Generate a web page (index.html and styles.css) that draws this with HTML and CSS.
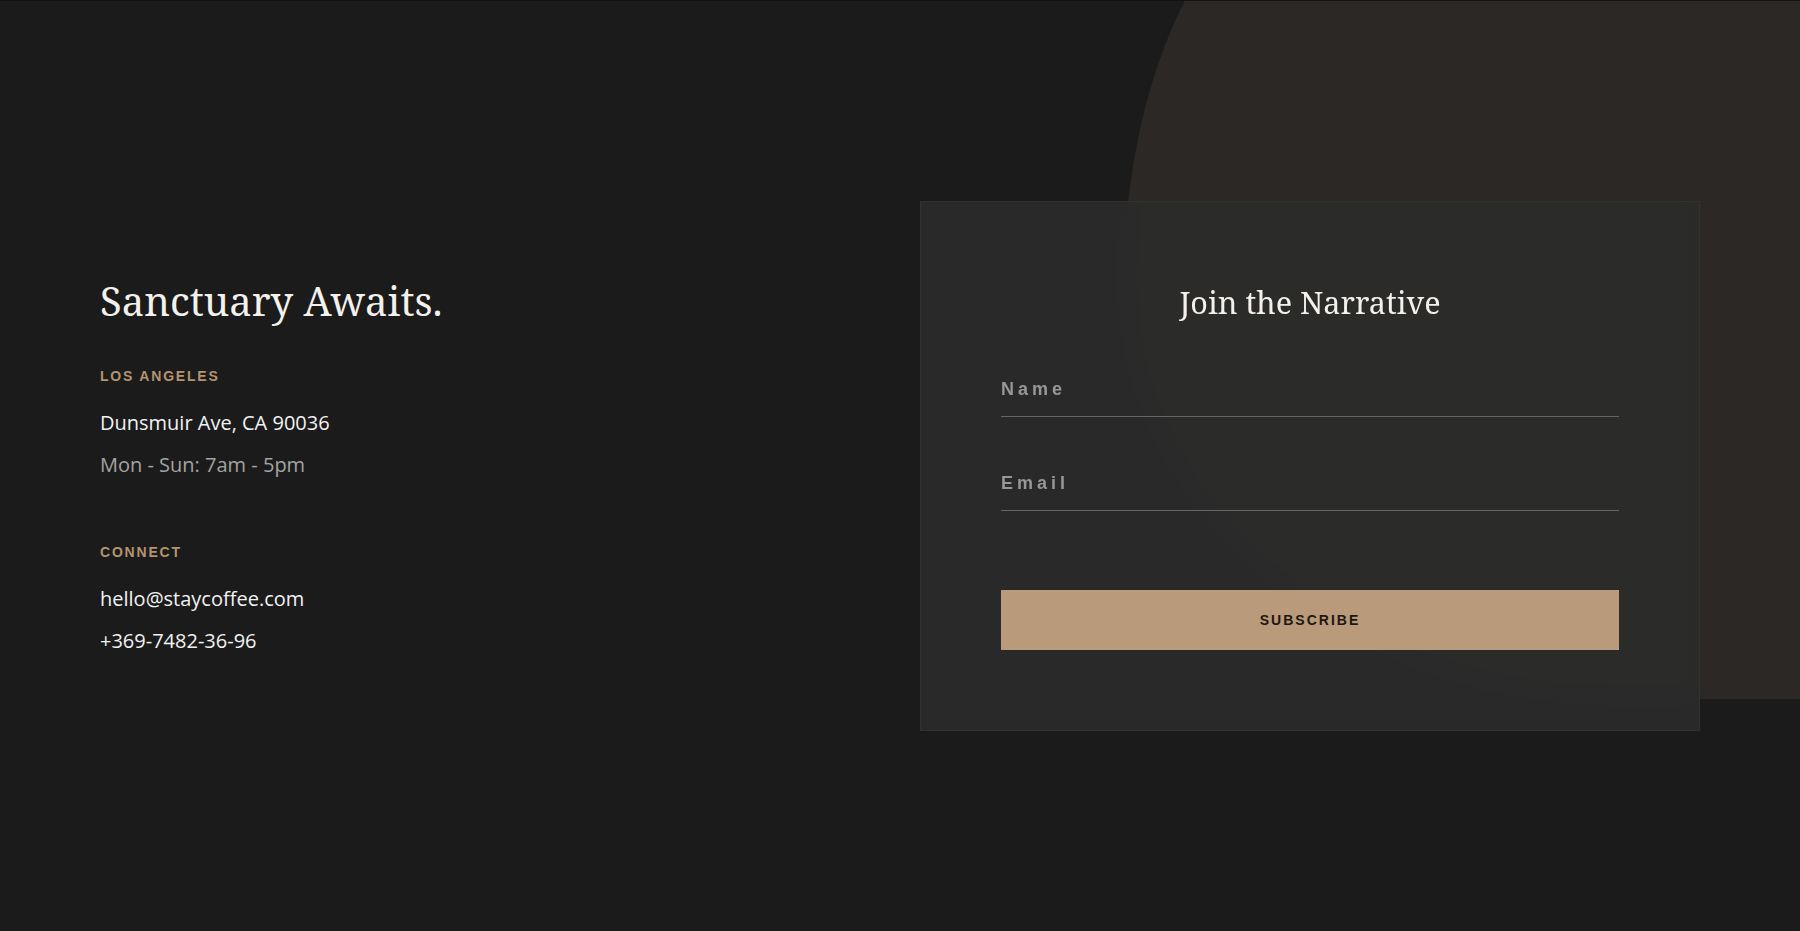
FILE: index.html
```html
<!DOCTYPE html>
<html lang="en">
<head>
    <meta charset="UTF-8">
    <meta name="viewport" content="width=device-width, initial-scale=1.0">
    <title>Stay Coffee - Contact</title>
    <link rel="stylesheet" href="styles.css">
</head>
<body>
    <section class="contact">
        <div class="contact-decor"></div>

        <div class="contact-inner">
            <div class="contact-info">
                <h2 class="contact-title">Sanctuary Awaits.</h2>

                <div class="info-group">
                    <h4 class="info-label">Los Angeles</h4>
                    <p class="info-line">Dunsmuir Ave, CA 90036</p>
                    <p class="info-line muted">Mon - Sun: 7am - 5pm</p>
                </div>

                <div class="info-group">
                    <h4 class="info-label">Connect</h4>
                    <p class="info-line">hello@staycoffee.com</p>
                    <p class="info-line">+369-7482-36-96</p>
                </div>
            </div>

            <form class="newsletter" onsubmit="return false;">
                <h3 class="newsletter-title">Join the Narrative</h3>
                <input type="text" class="newsletter-input" placeholder="Name">
                <input type="email" class="newsletter-input" placeholder="Email">
                <button type="submit" class="newsletter-button">Subscribe</button>
            </form>
        </div>
    </section>
</body>
</html>
```

FILE: styles.css
```css
* {
    box-sizing: border-box;
}

body {
    margin: 0;
    padding: 0;
    background-color: #1b1b1b;
    color: #f0eeeb;
    font-family: 'Open Sans', 'Noto Sans', sans-serif;
}

.contact {
    position: relative;
    height: 100vh;
    border-top: 1px solid #131313;
    overflow: hidden;
}

/* warm blob behind the form */
.contact-decor {
    position: absolute;
    top: -141px;
    right: 0;
    width: 676px;
    height: 839px;
    background: rgba(185, 155, 123, 0.1);
    border-radius: 240px 0 0 494px / 420px 0 0 419px;
}

.contact-inner {
    position: relative;
    height: 100%;
    padding: 0 100px;
    display: grid;
    grid-template-columns: 1fr 1fr;
    gap: 40px;
    align-items: center;
}

.contact-info {
    padding-top: 1.5px;
}

.contact-title {
    font-family: 'Noto Serif', 'DejaVu Serif', serif;
    font-weight: 400;
    font-size: 40px;
    line-height: 48px;
    margin: 0 0 41px;
    color: #f4f1ec;
}

.info-group {
    margin-bottom: 61px;
}

.info-group:last-child {
    margin-bottom: 0;
}

.info-label {
    font-family: 'Liberation Sans', Arial, sans-serif;
    font-weight: 700;
    font-size: 14px;
    line-height: 20px;
    letter-spacing: 1.8px;
    text-transform: uppercase;
    color: #b3946f;
    margin: 0 0 21px;
}

.info-line {
    font-size: 20px;
    line-height: 32px;
    margin: 0 0 10px;
    color: #f2f2f2;
}

.info-line:last-child {
    margin-bottom: 0;
}

.info-line.muted {
    color: #a3a3a3;
}

.newsletter {
    display: flex;
    flex-direction: column;
    padding: 80px;
    background: rgba(43, 43, 43, 0.9);
    border: 1px solid rgba(255, 255, 255, 0.04);
    backdrop-filter: blur(8px);
}

.newsletter-title {
    font-family: 'Noto Serif', 'DejaVu Serif', serif;
    font-weight: 400;
    font-size: 30.6px;
    line-height: 40px;
    text-align: center;
    margin: 0 0 42px;
    color: #f4f1ec;
}

.newsletter-input {
    width: 100%;
    padding: 14px 0 16px;
    line-height: 22px;
    height: 53px;
    background: transparent;
    border: none;
    border-bottom: 1px solid #666;
    color: #eee;
    font-family: 'Liberation Sans', Arial, sans-serif;
    font-weight: 700;
    font-size: 18px;
    letter-spacing: 4px;
    outline: none;
    margin-bottom: 41px;
}

.newsletter-input::placeholder {
    color: #979797;
}

.newsletter-input + .newsletter-input {
    margin-bottom: 79px;
}

.newsletter-button {
    height: 60px;
    width: 100%;
    background-color: #b99b7b;
    color: #1e1610;
    border: none;
    font-family: 'Liberation Sans', Arial, sans-serif;
    font-weight: 700;
    font-size: 14px;
    letter-spacing: 2px;
    text-transform: uppercase;
    cursor: pointer;
}
```
